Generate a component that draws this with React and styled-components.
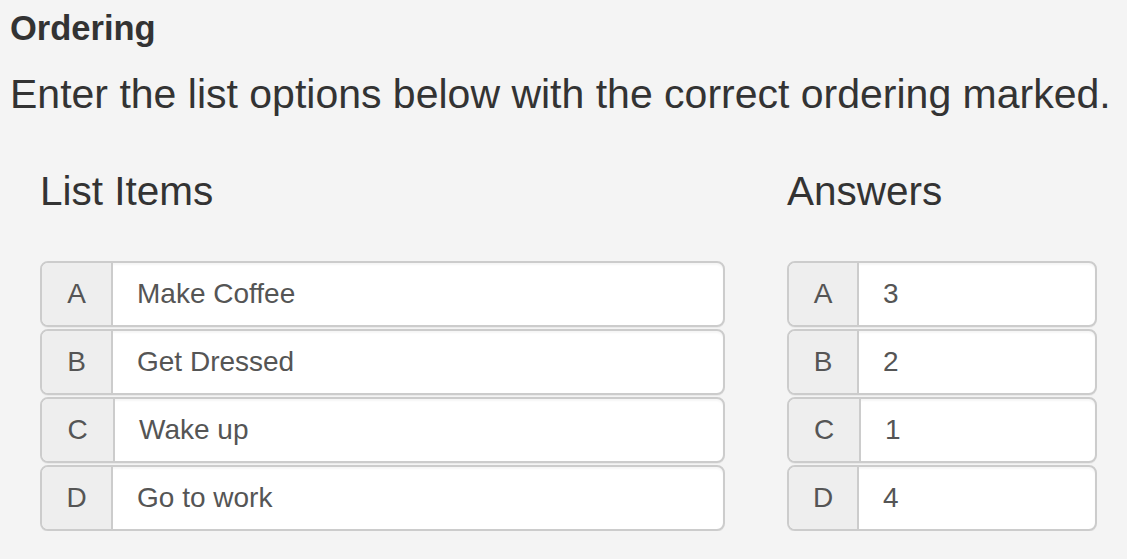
import React from 'react';
import styled, { createGlobalStyle } from 'styled-components';

const GlobalStyle = createGlobalStyle`
  html, body {
    margin: 0;
    background: #f4f4f4;
    font-family: "Liberation Sans", Arial, Helvetica, sans-serif;
    color: #333;
  }
`;

const Page = styled.div`
  padding: 8px 10px 0 10px;
`;

const Title = styled.h4`
  margin: 0;
  font-size: 34.5px;
  font-weight: 700;
  line-height: 40px;
  color: #333;
`;

const Lead = styled.p`
  margin: 21px 0 0 0;
  font-size: 41px;
  font-weight: 400;
  line-height: 50px;
  white-space: nowrap;
  color: #333;
`;

const Columns = styled.div`
  display: grid;
  grid-template-columns: 685px 310px;
  column-gap: 62px;
  padding: 0 20px 0 30px;
  margin-top: 47px;
`;

const Column = styled.div`
  display: flex;
  flex-direction: column;
`;

const ColumnTitle = styled.h3`
  margin: 0 0 45px 0;
  font-size: 40.5px;
  font-weight: 400;
  line-height: 50px;
  color: #333;
`;

const Rows = styled.div`
  display: flex;
  flex-direction: column;
  gap: 2px;
`;

const Group = styled.div`
  display: flex;
  height: 66px;
  box-sizing: border-box;
  border: 2px solid #ccc;
  border-radius: 8px;
  background: #fff;
  overflow: hidden;
  box-shadow: inset 0 2px 2px rgba(0, 0, 0, 0.04), 0 1px 0 rgba(0, 0, 0, 0.04);
`;

const Addon = styled.div`
  display: flex;
  align-items: center;
  justify-content: center;
  width: ${p => p.$w || 69}px;
  flex: none;
  background: #eee;
  border-right: 2px solid #ccc;
  font-size: 28px;
  color: #555;
`;

const Value = styled.div`
  display: flex;
  align-items: center;
  padding-left: 24px;
  font-size: 28px;
  color: #555;
`;

const items = [
  { key: 'A', text: 'Make Coffee', answer: '3' },
  { key: 'B', text: 'Get Dressed', answer: '2' },
  { key: 'C', text: 'Wake up', answer: '1' },
  { key: 'D', text: 'Go to work', answer: '4' },
];

export default function App() {
  return (
    <>
      <GlobalStyle />
      <Page>
        <Title>Ordering</Title>
        <Lead>Enter the list options below with the correct ordering marked.</Lead>
        <Columns>
          <Column>
            <ColumnTitle>List Items</ColumnTitle>
            <Rows>
              {items.map(it => (
                <Group key={it.key}>
                  <Addon $w={it.key === 'C' ? 71 : 69}>{it.key}</Addon>
                  <Value>{it.text}</Value>
                </Group>
              ))}
            </Rows>
          </Column>
          <Column>
            <ColumnTitle>Answers</ColumnTitle>
            <Rows>
              {items.map(it => (
                <Group key={it.key}>
                  <Addon $w={it.key === 'C' ? 70 : 68}>{it.key}</Addon>
                  <Value>{it.answer}</Value>
                </Group>
              ))}
            </Rows>
          </Column>
        </Columns>
      </Page>
    </>
  );
}
